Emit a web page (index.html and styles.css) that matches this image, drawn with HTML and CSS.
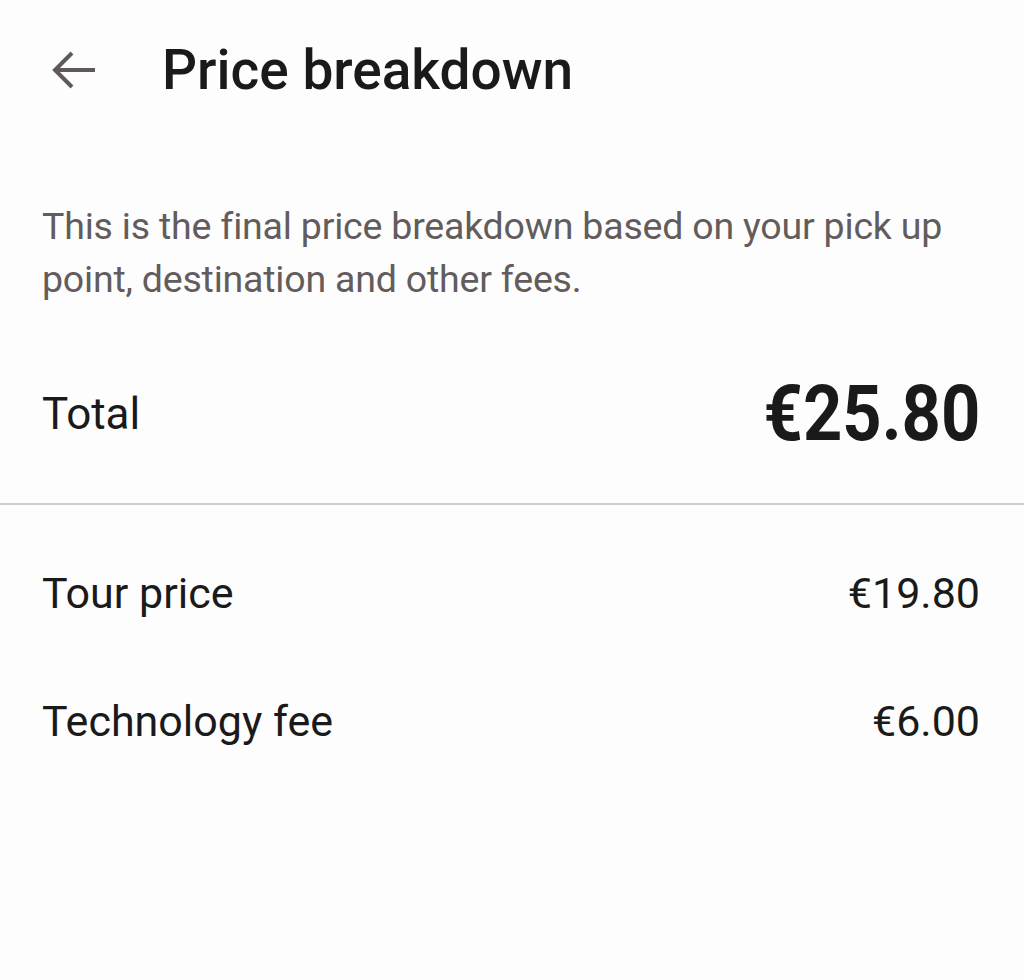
FILE: index.html
```html
<!DOCTYPE html>
<html lang="en">
<head>
	<meta charset="UTF-8">
	<meta name="viewport" content="width=device-width, initial-scale=1.0">
	<title>Price breakdown</title>
	<link rel="stylesheet" href="styles.css">
</head>
<body>

	<div class="top_bar">
		<svg class="back" width="48" height="40" viewBox="0 0 48 40">
			<path d="M45 20 H6 M22 3 L5 20 L22 37" fill="none" stroke="#5f5959" stroke-width="4"/>
		</svg>
		<h1 class="title">Price breakdown</h1>
	</div>

	<p class="intro">This is the final price breakdown based on your pick up point, destination and other fees.</p>

	<div class="total_row">
		<span class="total_label">Total</span>
		<span class="total_value">€25.80</span>
	</div>

	<div class="divider"></div>

	<div class="items">
		<div class="item">
			<span class="item_label">Tour price</span>
			<span class="item_value">€19.80</span>
		</div>
		<div class="item">
			<span class="item_label">Technology fee</span>
			<span class="item_value">€6.00</span>
		</div>
	</div>

</body>
</html>
```

FILE: styles.css
```css
body {
	margin: 0;
	background: #fdfdfd;
	color: #1a1a1a;
	font-family: Roboto, "Liberation Sans", sans-serif;
}

.top_bar {
	display: flex;
	align-items: center;
	height: 140px;
	padding-left: 50px;
}

.back {
	margin-right: 64px;
}

.title {
	margin: 0;
	font-size: 55px;
	font-weight: 500;
}

.intro {
	margin: 60px 42px 0;
	font-size: 37.5px;
	line-height: 53px;
	color: #625c5c;
	letter-spacing: -0.2px;
}

.total_row {
	display: flex;
	justify-content: space-between;
	align-items: center;
	padding: 18px 44px 0 42px;
	height: 179px;
}

.total_label {
	font-size: 44px;
}

.total_value {
	font-size: 78px;
	font-weight: 700;
	transform: scaleX(0.88);
	transform-origin: right;
}

.divider {
	height: 2px;
	background: #cfcfcf;
}

.items {
	padding: 60px 44px 0 42px;
	display: flex;
	flex-direction: column;
	gap: 72px;
}

.item {
	display: flex;
	justify-content: space-between;
	align-items: center;
	font-size: 43px;
	height: 56px;
}
```
